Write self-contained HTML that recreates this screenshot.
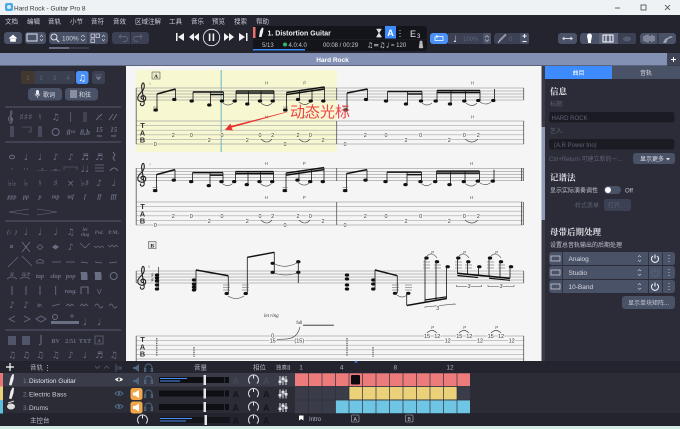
<!DOCTYPE html>
<html lang="zh"><head><meta charset="utf-8"><title>Hard Rock - Guitar Pro 8</title>
<style>
html,body{margin:0;padding:0;width:680px;height:429px;overflow:hidden;background:#2b2c38}
svg{display:block;filter:blur(.35px)}
text{font-family:"Liberation Sans","Noto Sans CJK SC",sans-serif}
.m{font-size:6.5px;fill:#c9cdd8}
.d{font-size:5.5px;fill:#3a3a3a;text-anchor:middle;paint-order:stroke;stroke:#f5f5f5;stroke-width:1.5px}
.dy{stroke:#f7f7d2}
.hp{font-size:4.5px;fill:#555;text-anchor:middle}
.p{font-size:9px;fill:#6a6f84;text-anchor:middle;font-family:"DejaVu Sans",sans-serif}
.ps{font-size:6px;fill:#6a6f84;text-anchor:middle;font-family:"Liberation Serif",serif;font-style:italic;font-weight:bold}
.h{font-size:8.5px;fill:#e3e5ea;font-weight:bold;font-family:"Noto Serif CJK SC",serif}
.s{font-size:6px;fill:#c0c4d0}
.dim{font-size:6px;fill:#5d6174}
.ns{stroke:#222;stroke-width:.85;fill:none}
.b{stroke:#111;stroke-width:1.5;fill:none}
.t{font-size:6.5px;fill:#aeb2c0}
g[fill="#111"] ellipse{rx:2.2px;ry:1.6px}
</style></head><body>
<svg width="680" height="429" viewBox="0 0 680 429" xmlns="http://www.w3.org/2000/svg">
<defs>
<g id="clef"><path d="M6 17.500c-2 .3-2.800-2-1.200-3 1.700-1 4 .2 3.900 2.500-.1 2.400-2.500 3.600-4.500 3.200C1.800 19.700.5 18 .8 15.800c.3-2.500 3-4.500 4.700-6.500 1.500-1.800 2-4 1.700-6-.2-1.300-.7-2-1.100-1.900-.9.2-1.600 2.200-1.500 4.300l2.600 15.500c.3 2-1 3.200-2.400 3-1.200-.2-1.900-1.600-1-2.500" fill="none" stroke="#222" stroke-width="1.100"/></g>
<g id="tab"><text x="0" y="0" style="font-size:7.500px;fill:#333;font-weight:bold" text-anchor="middle">T</text><text x="0" y="7.500" style="font-size:7.500px;fill:#333;font-weight:bold" text-anchor="middle">A</text><text x="0" y="14.500" style="font-size:7.500px;fill:#333;font-weight:bold" text-anchor="middle">B</text></g>
<g id="mix" stroke="#e0e2e8" stroke-width="1" fill="#e0e2e8"><path d="M1 0v9M4 0v9M7 0v9" fill="none"/><rect x="0" y="5" width="2" height="1.500"/><rect x="3" y="2" width="2" height="1.500"/><rect x="6" y="4" width="2" height="1.500"/></g>
<g id="knob"><path d="M-3.500 3.500A5 5 0 1 1 3.500 3.500" fill="none" stroke="#d5d8e0" stroke-width="1"/><path d="M0-4.800V-1.500" stroke="#e8e8ee" stroke-width="1"/></g>
<g id="mute"><rect x="0" y="0" width="12" height="12" rx="2.500" fill="#f3a64a"/><path d="M2.500 4.500h2l4-2.500v8l-4-2.500h-2z" fill="#fff"/></g>
<path id="phones" d="M0 5V3.500a3.500 3.500 0 0 1 7 0V5M-.5 4.500h1.300v3H-.5zM6.200 4.500h1.300v3H6.200z" fill="none" stroke="#4e6b86" stroke-width=".9"/>
<g id="eye"><path d="M0 2.500C2 0 6 0 8 2.500 6 5 2 5 0 2.500z" fill="none" stroke="#4f6d88"/><circle cx="4" cy="2.500" r="1.200" fill="#4f6d88"/></g>
<g id="bar1">
<path class="ns" d="M157 110V94M175.500 99.500V89M193 101V92M210.500 105V92M223.500 101V92M236 101V91M248.500 104V91M261 101V91M274 101V91M286.500 110V92.500M299.500 99V90M312 101V89M324.500 101V87"/>
<path d="M157 94L175.500 89" class="b"/>
<path d="M193 92H223.500M210.500 94.500H223.500" class="b"/>
<path d="M236 91H274M236 93H274" class="b"/>
<path d="M286.500 92.500L324.500 87M286.500 94.500L324.500 89" class="b"/>
<path d="M153 107h5M153 109h5M153 111h5M283 107h5M283 109h5M283 111h5" stroke="#555" stroke-width=".5"/>
<g fill="#111"><ellipse cx="155.700" cy="110" rx="1.800" ry="1.300"/><ellipse cx="174.300" cy="99.500" rx="1.800" ry="1.300"/><ellipse cx="191.700" cy="101" rx="1.800" ry="1.300"/><ellipse cx="209.300" cy="105" rx="1.800" ry="1.300"/><ellipse cx="222" cy="101" rx="1.800" ry="1.300"/><ellipse cx="234.700" cy="101" rx="1.800" ry="1.300"/><ellipse cx="247.300" cy="104" rx="1.800" ry="1.300"/><ellipse cx="260" cy="101" rx="1.800" ry="1.300"/><ellipse cx="272.700" cy="101" rx="1.800" ry="1.300"/><ellipse cx="285.300" cy="110" rx="1.800" ry="1.300"/><ellipse cx="298" cy="99.500" rx="1.800" ry="1.300"/><ellipse cx="310.700" cy="101" rx="1.800" ry="1.300"/><ellipse cx="323.300" cy="101" rx="1.800" ry="1.300"/></g>
<path d="M223 103q5 4 10 0M261 103q6 5 11 0M299 102q6 5 11 0" fill="none" stroke="#444" stroke-width=".6"/>
<path class="ns" d="M347 110V93M367.500 99V89M387.500 101V91.500M407.500 104V91.500M422 101V91.500M437 101V90.500M451 104V90.500M465.500 101V90.500M480 101V90.500M494.500 100V89"/>
<path d="M347 93L367.500 89M387.500 91.500H422M407.500 94H422" class="b"/>
<path d="M437 90.500H480M437 92.500H480" class="b"/>
<path d="M343 107h5M343 109h5M343 111h5" stroke="#555" stroke-width=".5"/>
<g fill="#111"><ellipse cx="345.700" cy="110" rx="1.800" ry="1.300"/><ellipse cx="366" cy="99.500" rx="1.800" ry="1.300"/><ellipse cx="386" cy="101" rx="1.800" ry="1.300"/><ellipse cx="406" cy="104" rx="1.800" ry="1.300"/><ellipse cx="421" cy="101" rx="1.800" ry="1.300"/><ellipse cx="435.700" cy="101" rx="1.800" ry="1.300"/><ellipse cx="450" cy="104" rx="1.800" ry="1.300"/><ellipse cx="464.300" cy="101" rx="1.800" ry="1.300"/><ellipse cx="478.300" cy="100.500" rx="1.800" ry="1.300"/><ellipse cx="493.300" cy="100.500" rx="1.800" ry="1.300"/></g>
<path d="M422 103q5 4 10 0M466 103q6 5 11 0M480 102q6 4 11 0" fill="none" stroke="#444" stroke-width=".6"/>
<text class="hp" x="266.700" y="84.500">H</text><text class="hp" x="304.700" y="84.500">P</text><text class="hp" x="472.300" y="84.500">H</text>
<text class="hp" x="266.700" y="118.500">H</text><text class="hp" x="304.700" y="118.500">P</text><text class="hp" x="472.300" y="118.500">H</text>
</g>
<g id="tabd1">
<text class="d" x="365.300" y="137">2</text><text class="d" x="386" y="137">0</text><text class="d" x="406" y="142">2</text><text class="d" x="420.700" y="137">0</text><text class="d" x="449.300" y="142">2</text><text class="d" x="464.300" y="137">0</text><text class="d" x="478.300" y="137">2</text><text class="d" x="345" y="146">0</text>
<path d="M465 139q7 6 13 0" fill="none" stroke="#444" stroke-width=".6"/>
</g>
<g id="tabd2">
<text class="d dy" x="155.300" y="146">0</text><text class="d dy" x="173.300" y="137">2</text><text class="d dy" x="191.300" y="137">0</text><text class="d dy" x="209.300" y="142">2</text><text class="d dy" x="222" y="137">0</text><text class="d dy" x="247.300" y="142">2</text><text class="d dy" x="260" y="137">0</text><text class="d dy" x="272.700" y="137">2</text><text class="d dy" x="285" y="146">0</text><text class="d dy" x="298" y="137">2</text><text class="d dy" x="310.300" y="137">0</text><text class="d dy" x="323" y="142">2</text>
<path d="M261 139q6 6 11 0M299 139q6 6 11 0" fill="none" stroke="#444" stroke-width=".6"/>
</g>
</defs>

<!-- chrome -->
<rect width="680" height="429" fill="#23242d"/>
<rect width="680" height="15" fill="#eef2f4"/>
<rect x="5" y="3" width="8" height="8" rx="2" fill="#4aa8e8"/><circle cx="9" cy="7" r="2" fill="#d7eefb"/>
<text x="14" y="10.500" style="font-size:6.500px;fill:#333">Hard Rock - Guitar Pro 8</text>
<path d="M615 8h5" stroke="#444" stroke-width=".8"/><rect x="641" y="5" width="5" height="5" fill="none" stroke="#444" stroke-width=".8"/><path d="M665 5l5 5M670 5l-5 5" stroke="#444" stroke-width=".8"/>
<text class="m" x="5" y="23.500">文档</text><text class="m" x="27" y="23.500">编辑</text><text class="m" x="48" y="23.500">音轨</text><text class="m" x="70" y="23.500">小节</text><text class="m" x="91" y="23.500">音符</text><text class="m" x="113" y="23.500">音效</text><text class="m" x="135" y="23.500">区域注解</text><text class="m" x="169" y="23.500">工具</text><text class="m" x="191" y="23.500">音乐</text><text class="m" x="212" y="23.500">预览</text><text class="m" x="234" y="23.500">搜索</text><text class="m" x="256" y="23.500">帮助</text>
<!-- toolbar left -->
<rect x="4" y="32" width="18" height="12" rx="3" fill="#4a5268"/><path d="M9 38.500l4-3.500 4 3.500M10.500 38v3.500h5V38z" fill="#fff" stroke="#fff" stroke-width=".6"/>
<rect x="25" y="32" width="21" height="12" rx="3" fill="#4a5268"/><rect x="27" y="34" width="10" height="7" fill="none" stroke="#e0e2e8"/><path d="M40 37l1.500-2 1.500 2M40 39l1.500 2 1.500-2" fill="none" stroke="#d5d8e0" stroke-width=".6"/>
<rect x="49" y="32" width="59" height="12" rx="3" fill="#4a5268"/>
<circle cx="54" cy="37" r="3" fill="none" stroke="#e0e2e8"/><path d="M56 39l3 3" stroke="#e0e2e8" stroke-width="1.200"/>
<text x="62" y="40.500" style="font-size:6.500px;fill:#d5d8e0">100%</text>
<path d="M81 37l2-2 2 2M81 39l2 2 2-2" fill="none" stroke="#d5d8e0" stroke-width=".6"/><path d="M88 32v12" stroke="#333644"/>
<rect x="91" y="34" width="3.500" height="3.500" fill="none" stroke="#e0e2e8" stroke-width=".7"/><rect x="96" y="34" width="3.500" height="3.500" fill="none" stroke="#e0e2e8" stroke-width=".7"/><rect x="91" y="39" width="3.500" height="3.500" fill="none" stroke="#e0e2e8" stroke-width=".7"/>
<path d="M102 37l1.500-2 1.500 2M102 39l1.500 2 1.500-2" fill="none" stroke="#d5d8e0" stroke-width=".6"/>
<rect x="49" y="47" width="40" height="2" fill="#3a3d4c"/><rect x="49" y="47" width="20" height="2" fill="#666b80"/>
<rect x="112" y="32" width="37" height="12" rx="3" fill="#3b4053"/><path d="M130.500 32v12" stroke="#2b2c38"/>
<path d="M119 36.500h6a2.500 2.500 0 0 1 0 5h-2M121 34.500l-2 2 2 2M142 36.500h-6a2.500 2.500 0 0 0 0 5h2M140 34.500l2 2-2 2" fill="none" stroke="#5f6579" stroke-width=".9"/>
<!-- transport -->
<g fill="#f2f2f4"><rect x="176" y="33" width="1.500" height="8"/><path d="M184 33v8l-6-4zM194 33v8l-5-4zM199 33v8l-5-4zM224 33v8l5-4zM229 33v8l5-4zM239 33v8l6-4z"/><rect x="246" y="33" width="1.500" height="8"/><rect x="208.800" y="33.500" width="1.600" height="7.500"/><rect x="212.600" y="33.500" width="1.600" height="7.500"/></g>
<circle cx="211.500" cy="37.500" r="8.200" fill="none" stroke="#e8e8ec" stroke-width=".9"/>
<!-- LCD -->
<rect x="253" y="26" width="174" height="25" rx="3" fill="#14151b"/>
<rect x="253" y="27" width="2.500" height="11" fill="#e87070"/>
<path d="M259 37l1-6 2-3.500 1.500.5-.5 4-1.500 5z" fill="#eee"/>
<text x="267.500" y="35.500" style="font-size:7px;font-weight:bold;fill:#eef0f4">1. Distortion Guitar</text>
<path d="M253 39.500h174" stroke="#24252d" stroke-width=".6"/>
<text x="262" y="47" style="font-size:6px;fill:#bfc3ce">5/13</text><circle cx="285" cy="44.500" r="2" fill="#2fb866"/>
<text x="288.500" y="47" style="font-size:6px;fill:#bfc3ce">4.0:4.0</text>
<text x="323" y="47" style="font-size:6px;fill:#c8ccd6">00:08 / 00:29</text>
<rect x="253" y="49" width="52" height="1.500" fill="#3d8bfd"/>
<rect x="385" y="26" width="11" height="12.500" fill="#3d8bfd"/><text x="390.500" y="36" text-anchor="middle" style="font-size:9px;font-weight:bold;fill:#fff">A</text>
<path d="M376.500 29h5l-5 8h5zM376.500 37h5l-2.500-4z" fill="#dcdfe6" stroke="#dcdfe6" stroke-width=".5"/>
<path d="M400 30v.8M400 33v.8M400 36v.8" stroke="#ddd" stroke-width="1.200"/>
<text x="410" y="37" style="font-size:9px;fill:#e4e6ec">E</text><text x="417" y="38" style="font-size:6px;fill:#e4e6ec">3</text>
<text x="367" y="47.500" style="font-size:7px;fill:#e0e2e8;font-family:'DejaVu Sans'">♫=♫</text>
<text x="386" y="47.500" style="font-size:7px;fill:#e0e2e8;font-family:'DejaVu Sans'">♩</text>
<text x="391" y="47" style="font-size:6px;fill:#c8ccd6">= 120</text>
<path d="M420 41h2l1 7h-4zM422 40.500l-1 5" fill="#bbb" stroke="#bbb" stroke-width=".4"/>
<!-- right tools -->
<rect x="430" y="33" width="18" height="11" rx="3" fill="#4a90f5"/>
<path d="M436 36.500h7v4h-8v-4M437.500 35l-1.500 1.500 1.500 1.500" fill="none" stroke="#fff" stroke-width=".8"/>
<rect x="448" y="33" width="43" height="11" fill="#3b4053"/><rect x="483" y="33" width="8" height="11" rx="2" fill="#4a5268"/>
<text x="453" y="42" style="font-size:9px;fill:#e4e6ec;font-family:'DejaVu Sans'">♩</text>
<text x="463" y="41" style="font-size:6px;fill:#5f6579">100%</text>
<path d="M485 37.500l2-2 2 2M485 39.500l2 2 2-2" fill="none" stroke="#cfd2da" stroke-width=".6"/>
<rect x="494" y="33" width="35" height="11" rx="3" fill="#3b4053"/><rect x="520" y="33" width="9" height="11" rx="2" fill="#4a5268"/>
<path d="M498 43l3-3 5-5-1-.5-5 5z" fill="none" stroke="#c0c4cf" stroke-width=".7"/>
<text x="509" y="41" style="font-size:6px;fill:#5f6579">0</text>
<path d="M522.500 36h4M524.500 34v4M522.500 41.500h4" stroke="#fff" stroke-width=".9"/>
<rect x="558" y="33" width="19" height="11" rx="3" fill="#4a5268"/><path d="M562 38.500l2.500-2v4zM573 38.500l-2.500-2v4z" fill="#d8dae2"/><path d="M564 38.500h7" stroke="#d8dae2"/>
<rect x="580" y="33" width="56" height="11" rx="3" fill="#4a5268"/><rect x="599" y="33" width="19" height="11" fill="#5a637b"/><rect x="618" y="33" width="18" height="11" rx="2" fill="#3b4053"/>
<path d="M587 36a2.500 2.500 0 0 1 5 0l-1 5v2h-3v-2z" fill="#fff"/><rect x="603" y="35" width="10" height="7" fill="none" stroke="#fff"/><path d="M606 35v7M610 35v7" stroke="#fff"/>
<ellipse cx="627" cy="39" rx="4" ry="2.500" fill="#565c70"/>
<rect x="640" y="33" width="36" height="11" rx="3" fill="#4a5268"/><path d="M658 33v11" stroke="#2b2c38"/>
<path d="M644 36v5M646 35v7M648 34.500v8M650 36v5M652 35v7M654 36v5" stroke="#bfc3ce" stroke-width=".9"/><path d="M663 43l2-4 6-3 2 1-5 2-2 4z" fill="#9fa4b4"/>
<!-- tab bar -->
<rect y="53" width="680" height="12.500" fill="#8391b4"/>
<text x="332.500" y="61.800" text-anchor="middle" style="font-size:6.500px;font-weight:bold;fill:#fff">Hard Rock</text>
<rect x="667" y="53" width="13" height="12.500" fill="#3f4557"/><path d="M671 59.500h5M673.500 57v5" stroke="#fff"/>
<rect y="65.500" width="680" height="1" fill="#33384a"/>

<!-- left panel -->
<rect y="66" width="126" height="295" fill="#2b2c38"/>
<rect x="21" y="71" width="13.500" height="13" rx="2" fill="#43382f"/><rect x="34.500" y="71" width="13.500" height="13" fill="#3a4050"/><rect x="48" y="71" width="13.500" height="13" fill="#3a4050"/><rect x="61.500" y="71" width="13.500" height="13" rx="2" fill="#3a4050"/>
<text x="28" y="80" text-anchor="middle" style="font-size:6px;fill:#6b5f50">1</text><text x="41" y="80" text-anchor="middle" style="font-size:6px;fill:#5f6579">2</text><text x="54.500" y="80" text-anchor="middle" style="font-size:6px;fill:#5f6579">3</text><text x="68" y="80" text-anchor="middle" style="font-size:6px;fill:#5f6579">4</text>
<rect x="76" y="71" width="12.500" height="13" rx="2.500" fill="#4a90f5"/><text x="82" y="81" text-anchor="middle" style="font-size:9px;fill:#fff;font-family:'DejaVu Sans'">♫</text>
<rect x="92" y="71" width="13" height="13" rx="2.500" fill="#3b4053"/><path d="M95 75h7M96 77h5l-2.500 3z" fill="#717689" stroke="#717689" stroke-width=".6"/>
<rect x="28" y="88" width="34" height="12.500" rx="3.500" fill="#4a5268"/><rect x="65" y="88" width="33" height="12.500" rx="3.500" fill="#4a5268"/>
<rect x="36" y="90" width="3" height="5" rx="1.500" fill="#e8e8ee"/><path d="M35 93.500a2.500 2.500 0 0 0 5 0M37.500 96v2" fill="none" stroke="#e8e8ee" stroke-width=".6"/>
<text x="43" y="97" style="font-size:6px;fill:#e0e2e8">歌词</text>
<rect x="70" y="90" width="7" height="8" fill="#8a8f9f"/><text x="79" y="97" style="font-size:6px;fill:#e0e2e8">和弦</text>
<path d="M5 107h116M5 142h116M5 221h116M5 330h116" stroke="#555a6e" stroke-width="1"/>

<g>
<path transform="translate(8,110) scale(.55)" d="M6 17.500c-2 .3-2.800-2-1.200-3 1.700-1 4 .2 3.900 2.500-.1 2.400-2.500 3.600-4.500 3.200C1.800 19.700.5 18 .8 15.800c.3-2.500 3-4.500 4.700-6.500 1.500-1.800 2-4 1.700-6-.2-1.300-.7-2-1.100-1.900-.9.2-1.600 2.200-1.500 4.300l2.600 15.500c.3 2-1 3.200-2.400 3-1.200-.2-1.900-1.600-1-2.500" fill="none" stroke="#6a6f84" stroke-width="1.500"/>
<text class="p" x="26" y="120">♯♯♯</text><text class="p" x="40" y="120">♮</text><text class="p" x="55.700" y="120">♫</text><path d="M70.700 112v10M84 112v10M86 112v10" stroke="#6a6f84" stroke-width=".7"/><path d="M96 120l6-6M98 115v.8M101 119v.8M109 120l4-6M113 120l4-6" stroke="#6a6f84" stroke-width=".9"/>
<path d="M11 126v11M13 126v11M41 126v11M39 126v11" stroke="#6a6f84" stroke-width=".9"/><path d="M22 127h9v5h-3" fill="none" stroke="#6a6f84" stroke-width=".6"/><circle cx="55.700" cy="132" r="3.500" fill="none" stroke="#6a6f84"/>
<text class="ps" x="70.700" y="135" style="font-size:8px">8ᵛᵃ</text><text class="ps" x="85" y="135" style="font-size:8px">8ᵥb</text><text class="ps" x="99.300" y="132" style="font-size:7px">15</text><text class="ps" x="99.300" y="137" style="font-size:4px">ma</text><text class="ps" x="113.700" y="132" style="font-size:7px">15</text><text class="ps" x="113.700" y="137" style="font-size:4px">mb</text>

<ellipse cx="12" cy="157" rx="2.500" ry="1.800" fill="none" stroke="#6a6f84"/><text class="p" x="26" y="160">♩</text><text class="p" x="40" y="160">♩</text><text class="p" x="55.700" y="160">♪</text><text class="p" x="70.700" y="160">♪</text><text class="p" x="85" y="160">♬</text><text class="p" x="99.300" y="160">♬</text><path d="M113 152l2 3-2 3 2 3" fill="none" stroke="#6a6f84"/>
<text class="p" x="12" y="172">·</text><text class="p" x="26" y="172">··</text><text class="ps" x="42" y="171" style="font-size:4px">—3—</text><text class="ps" x="55.700" y="171" style="font-size:4px">—m—</text><path d="M64 167h13v3M64 167v3" fill="none" stroke="#6a6f84" stroke-width=".6"/><text class="p" x="85" y="172">♩♩</text><path d="M95 165h9M95 168h9M95 171h9" stroke="#6a6f84" stroke-width=".7" fill="none"/><path d="M110 171q4-6 8 0" fill="none" stroke="#6a6f84"/>
<text class="p" x="12" y="186">♭♭</text><text class="p" x="26" y="186">♭</text><text class="p" x="40" y="186">♮</text><text class="p" x="55.700" y="186">♯</text><text class="p" x="70.700" y="186">×</text><text class="p" x="85" y="186">♭♯</text><text class="p" x="99.300" y="186">♪</text><text class="p" x="113.700" y="186">♩</text>
<text class="ps" x="12" y="198.500">ppp</text><text class="ps" x="26" y="198.500">pp</text><text class="ps" x="40" y="198.500">p</text><text class="ps" x="55.700" y="198.500">mp</text><text class="ps" x="70.700" y="198.500">mf</text><text class="ps" x="85" y="198.500">f</text><text class="ps" x="99.300" y="198.500">ff</text><text class="ps" x="113.700" y="198.500">fff</text>
<path d="M29 210L9 213M29 216L9 213M37 210l20 3M37 216l20-3" stroke="#6a6f84" stroke-width=".6" fill="none" transform="translate(0,-1)"/>

<text class="ps" x="12" y="234">(♩)</text><text class="p" x="26" y="235">♩</text><text class="p" x="40" y="235">♩</text><text class="p" x="55.700" y="235">♩</text><text class="p" x="70.700" y="235">♫</text><text class="ps" x="85" y="231" style="font-size:5px">let</text><text class="ps" x="85" y="236" style="font-size:5px">ring</text><text class="ps" x="99.300" y="234" style="font-size:5px">Ped.</text><text class="ps" x="113.700" y="234" style="font-style:normal;font-size:5.500px">P.M.</text>
<path d="M10 245l3 3M13 245l-3 3M22 242l8 10M30 242l-8 10" stroke="#6a6f84" stroke-width=".9"/><path d="M37 247l3-2.500 3 2.500-3 2.500z" fill="none" stroke="#6a6f84" stroke-width=".7"/><path d="M52 247l3.500-2.500 3.500 2.500-3.500 2.500z" fill="#6a6f84"/><text class="p" x="70.700" y="250">♪</text><path d="M80 243l5 5 5-5" fill="none" stroke="#6a6f84" stroke-width=".7"/><path d="M94 246l2 1.500 2-1.500 2 1.500 2-1.500 2 1.500M108 245l2 2 2-2 2 2 2-2 2 2" fill="none" stroke="#6a6f84" stroke-width=".7"/>
<path d="M8 267l10-10M22 256l10 10M36 262q4-5 8 0M36 263h8M52 262h9M66 262h9M81 262l7 1M95 262l7 1M109 263l8-1" fill="none" stroke="#6a6f84" stroke-width=".7"/>
<text class="ps" x="12" y="276" style="font-size:5px">H</text><text class="ps" x="26" y="276" style="font-size:5px">H/P</text><path d="M7 279q5-4 10 0M20 279q5-4 10 0" fill="none" stroke="#6a6f84" stroke-width=".7"/><text class="ps" x="40" y="278" style="font-size:6.500px">tap</text><text class="ps" x="55.700" y="278" style="font-size:6.500px">slap</text><text class="ps" x="70.700" y="278" style="font-size:6.500px">pop</text>
<path d="M81 280v-5l-.5-3h6.500l.5 3v5zM95 280v-5l-.5-3h6.500l.5 3v5z" fill="#6a6f84"/><circle cx="113.700" cy="276" r="3.500" fill="none" stroke="#6a6f84"/>
<path d="M12 286v9M26 286v9M40 286v9M55.700 286v9" stroke="#6a6f84" stroke-width=".9"/><text class="ps" x="70.700" y="293" style="font-size:6px">rasg.</text><path d="M81 287h7v7M81 287v7" fill="none" stroke="#6a6f84"/><text class="p" x="99.300" y="294" style="font-size:7px">V</text>
<text class="p" x="12" y="308">♪</text><text class="p" x="26" y="308">♪</text><text class="ps" x="40" y="307">tr.</text><path d="M52 306l8-2M66 306l2-2 2 2 2-2 2 2M80 306l2-2 2 2 2-2 2 2M95 306q2-4 4 0t4 0M109 306q2-4 4 0t4 0" stroke="#6a6f84" fill="none" stroke-width=".8"/>
<path d="M15 316l-6 3 6 3M24 316l6 3-6 3M36 319l5-3 5 3-5 3z" fill="none" stroke="#6a6f84" stroke-width=".8"/><circle cx="55" cy="317" r="2.500" fill="none" stroke="#6a6f84"/><rect x="51" y="321" width="14" height="3" fill="#6a6f84"/><path d="M70 316h4M72 314v4" stroke="#6a6f84" stroke-width=".7"/><rect x="65" y="321" width="14" height="3" fill="#6a6f84"/><text class="p" x="85" y="325">♩</text><text class="p" x="99.300" y="325">♩</text>

<rect x="8" y="336" width="8" height="9" fill="#50556a"/><rect x="22" y="336" width="8" height="9" fill="#50556a"/><path d="M41 335v9l-2 1" stroke="#6a6f84" fill="none"/>
<text class="ps" x="55.700" y="343" style="font-style:normal;font-size:6px">BV</text><text class="ps" x="70.700" y="343" style="font-style:normal;font-size:6px">2:51</text><text class="ps" x="85" y="343" style="font-style:normal;font-size:6px">TXT</text><rect x="95" y="336" width="8" height="8" fill="none" stroke="#6a6f84" stroke-width=".7"/><text class="ps" x="99" y="342.500" style="font-style:normal;font-size:5px">A</text>
<text class="p" x="12" y="358">♫</text><text class="p" x="26" y="358">♫</text><text class="p" x="40" y="358">♫</text><text class="p" x="55.700" y="358">♫</text><text class="p" x="70.700" y="358">♪</text><text class="p" x="85" y="358">♩</text><text class="p" x="99.300" y="358">♬</text><text class="p" x="113.700" y="358">♫</text>
</g>

<!-- score -->
<rect x="126" y="66" width="419" height="295" fill="#f5f5f5"/>
<rect x="136" y="70" width="201" height="82" fill="#f7f7d2"/>
<rect x="220.500" y="70" width="1.500" height="82" fill="#9ac9c8"/>
<path d="M136 88h388M136 91h388M136 94h388M136 97h388M136 100h388M136 121h388M136 125.600h388M136 130.200h388M136 134.800h388M136 139.400h388M136 144h388M136 168.500h387M136 171.500h387M136 174.500h387M136 177.500h387M136 180.500h387M136 202h387M136 206.600h387M136 211.200h387M136 215.800h387M136 220.400h387M136 225h387M136 271h388M136 274h388M136 277h388M136 280h388M136 283h388M136 336h388M136 340.600h388M136 345.200h388M136 349.800h388M136 354.400h388M136 359h388" stroke="#a8a8a8" stroke-width=".65" fill="none"/>
<path d="M136.200 88v56M336.700 88v12M336.700 121v23M523.700 88v12M523.700 121v23M136.200 168v57M336.700 168v13M336.700 202v23M136.200 271v12M136.200 336v25M523.700 271v12M523.700 336v25" stroke="#555" stroke-width=".8" fill="none"/>
<path d="M521.500 168v13M521.500 202v23M523.300 168v13M523.300 202v23" stroke="#555" stroke-width=".9" fill="none"/>
<rect x="152" y="72" width="8" height="7" fill="#e8e8c4" stroke="#555" stroke-width=".6"/><text x="156" y="77.800" text-anchor="middle" style="font-size:5.500px;font-family:'Liberation Serif';fill:#222;font-weight:bold">A</text>
<rect x="148.500" y="241.500" width="7.500" height="7" fill="#e4e4e4" stroke="#555" stroke-width=".6"/><text x="152.200" y="247.300" text-anchor="middle" style="font-size:5.500px;font-family:'Liberation Serif';fill:#222;font-weight:bold">B</text>
<text x="149" y="85" style="font-size:3.500px;fill:#888">1</text><text x="149" y="166" style="font-size:3.500px;fill:#888">7</text><text x="148" y="268" style="font-size:3.500px;fill:#888">9</text>
<use href="#clef" x="137" y="81.500"/><use href="#clef" x="137" y="162"/><use href="#clef" x="137" y="265"/>
<use href="#tab" x="142.500" y="128"/><use href="#tab" x="142.500" y="209"/><use href="#tab" x="142.500" y="342"/>
<use href="#bar1"/><use href="#bar1" y="80.600" x="-.5"/>
<use href="#tabd1"/><use href="#tabd2"/>
<g transform="translate(0,81)"><text class="d" x="155.300" y="146">0</text><text class="d" x="173.300" y="137">2</text><text class="d" x="191.300" y="137">0</text><text class="d" x="209.300" y="142">2</text><text class="d" x="222" y="137">0</text><text class="d" x="247.300" y="142">2</text><text class="d" x="260" y="137">0</text><text class="d" x="272.700" y="137">2</text><text class="d" x="285" y="146">0</text><text class="d" x="298" y="137">2</text><text class="d" x="310.300" y="137">0</text><text class="d" x="323" y="142">2</text><path d="M261 139q6 6 11 0M299 139q6 6 11 0" fill="none" stroke="#444" stroke-width=".6"/><use href="#tabd1"/></g>
<!-- annotation -->
<path d="M286.700 112L231 127.500l1.500 2.800-7 -.8 4.800-5.300 .9 2z" fill="#ea2f2f" stroke="#ea2f2f" stroke-width=".6"/>
<text x="290" y="117" style="font-size:15px;fill:#ee4444">动态光标</text>
<!-- system 3 notes -->
<text x="151" y="277" style="font-size:6px;fill:#222;font-family:'DejaVu Sans'">♯</text>
<text x="151" y="282" style="font-size:6px;fill:#222;font-family:'DejaVu Sans'">♯</text>
<path d="M158.500 267V289" stroke="#444" stroke-width=".8"/>
<g fill="#111">
<ellipse cx="157" cy="275" rx="1.800" ry="1.300"/><ellipse cx="157" cy="278" rx="1.800" ry="1.300"/><ellipse cx="157" cy="281" rx="1.800" ry="1.300"/><ellipse cx="157" cy="285" rx="1.800" ry="1.300"/><ellipse cx="157" cy="289" rx="1.800" ry="1.300"/>
<ellipse cx="194" cy="280" rx="1.800" ry="1.300"/><ellipse cx="194" cy="284" rx="1.800" ry="1.300"/><ellipse cx="194" cy="287" rx="1.800" ry="1.300"/><ellipse cx="194" cy="290" rx="1.800" ry="1.300"/>
<ellipse cx="226.700" cy="293.500" rx="1.800" ry="1.300"/><ellipse cx="245.700" cy="293.500" rx="1.800" ry="1.300"/>
<ellipse cx="272.700" cy="263.300" rx="1.800" ry="1.300"/><ellipse cx="272.700" cy="272.300" rx="1.800" ry="1.300"/>
<ellipse cx="298.300" cy="261.700" rx="1.800" ry="1.300"/><ellipse cx="298.300" cy="272.300" rx="1.800" ry="1.300"/>
<ellipse cx="347" cy="275" rx="1.800" ry="1.300"/><ellipse cx="347" cy="279" rx="1.800" ry="1.300"/><ellipse cx="347" cy="285" rx="1.800" ry="1.300"/><ellipse cx="347" cy="289" rx="1.800" ry="1.300"/>
<ellipse cx="373.300" cy="280" rx="1.800" ry="1.300"/><ellipse cx="373.300" cy="284" rx="1.800" ry="1.300"/><ellipse cx="373.300" cy="289" rx="1.800" ry="1.300"/>
<ellipse cx="395" cy="293.300" rx="1.800" ry="1.300"/><ellipse cx="408.300" cy="293.300" rx="1.800" ry="1.300"/>
<ellipse cx="426.500" cy="258" rx="1.800" ry="1.300"/><ellipse cx="437" cy="261.700" rx="1.800" ry="1.300"/><ellipse cx="447.700" cy="266.700" rx="1.800" ry="1.300"/>
<ellipse cx="458.300" cy="258" rx="1.800" ry="1.300"/><ellipse cx="468.300" cy="261.700" rx="1.800" ry="1.300"/><ellipse cx="479.300" cy="266.700" rx="1.800" ry="1.300"/>
<ellipse cx="490" cy="258" rx="1.800" ry="1.300"/><ellipse cx="501" cy="261.700" rx="1.800" ry="1.300"/><ellipse cx="511" cy="266.700" rx="1.800" ry="1.300"/>
</g>
<path class="ns" d="M196 270V290M228.300 275.700V293M247.300 257.300V293M274.300 252.300V272M298.300 262V283M375 270V289M397.300 275.700V293M406.700 305V293M425 258V302M436 262V300.500M446.500 267V299M457.500 258V273.500M467.500 262V274.500M478.500 267V275.500M489 258V276M500 262V277M510 267V278"/>
<path d="M196 270L228.300 275.700M247.300 257.300L274.300 252.300M375 270L397.300 275.700" class="b"/>
<path d="M406.700 305.500L446.700 298.500" stroke="#111" stroke-width="1.600"/><path d="M425 300L446.700 296.800" stroke="#111" stroke-width="1.200"/>
<path d="M457.300 273.300L510 278.300" stroke="#111" stroke-width="1.600"/><path d="M457.300 275.500L478 277.500M489 278.200L510 280.300" stroke="#111" stroke-width="1.200"/>
<path d="M223 285h7M223 287.500h7M223 290h7M242 285h7M242 287.500h7M242 290h7M392 285h7M392 287.500h7M392 290h7M405 285h7M405 287.500h7M405 290h7M423 262h7M423 265h7M423 268h7M434 265h7M434 268h7M455 262h7M455 265h7M455 268h7M465 265h7M465 268h7M487 262h7M487 265h7M487 268h7M498 265h7M498 268h7" stroke="#555" stroke-width=".55"/>
<path d="M228 296q8 5 16 0M275 264q10 5 22-1M274 273q12 4 23 0M397 295q5 4 10 0M427 256q5-5 10 2M459 256q5-5 10 2M491 256q5-5 10 2" fill="none" stroke="#444" stroke-width=".6"/>
<path d="M425 308v-1l30-3v1M456.500 285v1.500h25V285M488 285v1.500h26V285" fill="none" stroke="#444" stroke-width=".6"/>
<text x="437.700" y="310" style="font-size:5px;font-style:italic;fill:#333;paint-order:stroke;stroke:#f5f5f5;stroke-width:1.500px" text-anchor="middle">3</text><text x="469" y="288" style="font-size:5px;font-style:italic;fill:#333;paint-order:stroke;stroke:#f5f5f5;stroke-width:1.500px" text-anchor="middle">3</text><text x="501" y="288" style="font-size:5px;font-style:italic;fill:#333;paint-order:stroke;stroke:#f5f5f5;stroke-width:1.500px" text-anchor="middle">3</text>
<text class="hp" x="432.700" y="254">P</text><text class="hp" x="464.700" y="254">P</text><text class="hp" x="496.700" y="254">P</text>
<text x="264" y="317" style="font-size:5px;font-family:'Liberation Serif';font-style:italic;fill:#333">let ring</text>
<text x="299.300" y="324" text-anchor="middle" style="font-size:4.500px;fill:#333">full</text>
<path d="M303 325.700l1 -1 1 1 1 -1 1 1 1 -1 1 1 1 -1 1 1 1 -1 1 1 1 -1 1 1 1 -1 1 1 1 -1 1 1 1 -1 1 1 1 -1 1 1 1 -1 1 1 1 -1 1 1 1 -1 1 1 1 -1 1 1 1 -1 1 1 1 -1" fill="none" stroke="#333" stroke-width=".6"/>
<path d="M277 339.300c10 0 20 1 23-12.500" fill="none" stroke="#444" stroke-width=".6"/>
<text class="d" x="272.700" y="337.500">0</text><text class="d" x="272.700" y="342.500">15</text><text class="d" x="299.300" y="342.500">(15)</text>
<text class="d" x="427" y="338">15</text><text class="d" x="437.300" y="338">12</text><text class="d" x="447.700" y="342.500">12</text><text class="d" x="459.300" y="338">15</text><text class="d" x="469.300" y="338">12</text><text class="d" x="480" y="342.500">12</text><text class="d" x="490.700" y="338">15</text><text class="d" x="501" y="338">12</text><text class="d" x="511.700" y="342.500">12</text>
<path d="M427 333q5-5 10 0M459 333q5-5 10 0M491 333q5-5 10 0" fill="none" stroke="#444" stroke-width=".6"/>
<text class="hp" x="432.700" y="329">P</text><text class="hp" x="464.700" y="329">P</text><text class="hp" x="496.700" y="329">P</text>
<path d="M156.700 338v18M347 338v18M194 347v10M373 347v10" stroke="#777" stroke-width="1.500" stroke-dasharray="1.500 .8"/>
<!-- scrollbar -->
<rect x="541.500" y="66" width="3.500" height="295" fill="#3a3b45"/><rect x="541.500" y="127" width="3.500" height="93" fill="#8f9ab8"/>

<!-- right panel -->
<rect x="545" y="66" width="135" height="295" fill="#2b2c38"/>
<rect x="545" y="66" width="67" height="13" fill="#3d8bfd"/><rect x="612" y="66" width="68" height="13" fill="#4a5268"/>
<text x="578.500" y="75" text-anchor="middle" style="font-size:6px;fill:#fff">曲目</text><text x="646" y="75" text-anchor="middle" style="font-size:6px;fill:#d8dae2">音轨</text>
<text class="h" x="550" y="94.500">信息</text>
<text class="dim" x="550" y="106">标题:</text>
<rect x="549" y="112" width="125.500" height="10.500" rx="2.500" fill="#1b1c23"/><text x="551.500" y="120" style="font-size:6px;fill:#5d6174">HARD ROCK</text>
<text class="dim" x="550" y="133">艺人:</text>
<rect x="549" y="139" width="125.500" height="10.500" rx="2.500" fill="#1b1c23"/><text x="554" y="147" style="font-size:6px;fill:#5d6174">(A.R Power trio)</text>
<text class="dim" x="549" y="161">Ctrl+Return 可建立新的一...</text>
<rect x="633" y="153" width="42" height="11" rx="3" fill="#4a5268"/><text x="640" y="161" style="font-size:6px;fill:#e0e2e8">显示更多</text><path d="M666 158h4l-2 2.500z" fill="#e0e2e8"/>
<text class="h" x="550" y="180.500">记谱法</text>
<text class="s" x="550" y="192.500">显示实际演奏调性</text>
<rect x="604" y="186" width="17" height="8" rx="4" fill="#4a5268"/><circle cx="608" cy="190" r="3" fill="#fff"/>
<text x="625" y="192.500" style="font-size:6px;fill:#c0c4d0">Off</text>
<text class="dim" x="575" y="207.500">样式表单</text>
<rect x="604" y="199" width="27" height="12" rx="2.500" fill="#3b4053"/><text x="608" y="207.500" class="dim">打开...</text>
<text class="h" x="550" y="235">母带后期处理</text>
<text class="s" x="550" y="247">设置总音轨输出的后期处理</text>
<rect x="549" y="252" width="126" height="13" rx="3" fill="#4a5268"/><rect x="549" y="266" width="126" height="13" rx="3" fill="#4a5268"/><rect x="549" y="280" width="126" height="13" rx="3" fill="#4a5268"/>
<path d="M562.500 252v41M648.500 252v41M662.500 252v41" stroke="#2b2c38" stroke-width=".8"/>
<rect x="551" y="256" width="9" height="5" fill="none" stroke="#d8dae2" stroke-width=".7"/><rect x="551" y="270" width="9" height="5" fill="none" stroke="#d8dae2" stroke-width=".7"/><rect x="551" y="284" width="9" height="5" fill="none" stroke="#d8dae2" stroke-width=".7"/>
<text x="568.500" y="261" style="font-size:6.500px;fill:#d8dae2">Analog</text><text x="568.500" y="275" style="font-size:6.500px;fill:#d8dae2">Studio</text><text x="568.500" y="289" style="font-size:6.500px;fill:#d8dae2">10-Band</text>
<path d="M638 257l1.500-1.500 1.500 1.500M638 260l1.500 1.500 1.500-1.500M638 271l1.500-1.500 1.500 1.500M638 274l1.500 1.500 1.500-1.500M638 285l1.500-1.500 1.500 1.500M638 288l1.500 1.500 1.500-1.500" fill="none" stroke="#cfd2da" stroke-width=".6"/>
<path d="M653 256a3.500 3.500 0 1 0 4 0M655 254.500v4M653 284a3.500 3.500 0 1 0 4 0M655 282.500v4" fill="none" stroke="#fff" stroke-width="1"/>
<path d="M653 270a3.500 3.500 0 1 0 4 0M655 268.500v4" fill="none" stroke="#5a637b" stroke-width="1"/>
<path d="M669 255v.8M669 258v.8M669 261v.8M669 269v.8M669 272v.8M669 275v.8M669 283v.8M669 286v.8M669 289v.8" stroke="#e0e2e8" stroke-width="1"/>
<rect x="622" y="296" width="53" height="13" rx="3" fill="#4a5268"/><text x="628" y="305" style="font-size:6px;fill:#c8ccd6">显示单块矩阵...</text>

<!-- bottom panel -->
<rect y="361" width="680" height="65" fill="#2b2c36"/>
<rect y="361" width="680" height="12" fill="#23242d"/>
<rect y="413" width="680" height="13" fill="#23242d"/>
<rect y="426" width="680" height="3" fill="#d5ece6"/>
<path d="M356 360.500l-2 2h4z" fill="#3d8bfd"/>
<path d="M6 367h8M10 363v8" stroke="#fff" stroke-width="1.200"/>
<text class="t" x="30" y="369.500">音轨</text><path d="M47.500 365v.8M47.500 367.500v.8M47.500 370v.8" stroke="#ccc"/>
<path d="M95 366l2.500 2.500 2.500-2.500M104 368.500l2.500-2.500 2.500 2.500" fill="none" stroke="#4a4e5e"/>
<path d="M116 364v8M117 367h4v2h-4" fill="none" stroke="#4a5a70"/>
<path d="M133 367h2l4-3v8l-4-3h-2z" fill="#50667c"/><use href="#phones" x="145" y="364"/>
<text class="t" x="194" y="369.500">音量</text><text class="t" x="253" y="369.500">相位</text><text x="276" y="369.500" style="font-size:5.500px;fill:#aeb2c0">独奏</text><path d="M288 365v5M289.500 365v5" stroke="#aeb2c0" stroke-width=".6"/>
<rect x="3" y="373" width="292" height="13.500" fill="#3a3c49"/>
<rect y="373" width="3" height="13.500" fill="#e87878"/><rect y="386.500" width="3" height="13.500" fill="#e9d27a"/><rect y="400" width="3" height="13.500" fill="#5fc0dd"/>
<path d="M9 385l1.500-7 2-4 1.500 .5-.5 5-2 6zM9 398.500l1.500-7 2-4 1.500 .5-.5 5-2 6z" fill="#eee"/><ellipse cx="11" cy="406.500" rx="4" ry="3" fill="#ddd"/><path d="M8 403l6-2" stroke="#ddd"/>
<text x="23" y="383" style="font-size:6.500px;fill:#7c8092">1.</text><text x="29" y="383" style="font-size:6.500px;fill:#e0e2e8">Distortion Guitar</text>
<text x="23" y="396.500" style="font-size:6.500px;fill:#7c8092">2.</text><text x="29" y="396.500" style="font-size:6.500px;fill:#d0d3dc">Electric Bass</text>
<text x="23" y="410" style="font-size:6.500px;fill:#7c8092">3.</text><text x="29" y="410" style="font-size:6.500px;fill:#d0d3dc">Drums</text>
<text x="30" y="422.500" style="font-size:6.500px;fill:#b8bcc8">主控台</text>
<g transform="translate(115,377)"><path d="M0 2.500C2 0 6 0 8 2.500 6 5 2 5 0 2.500z" fill="#eee"/><circle cx="4" cy="2.500" r="1.200" fill="#333"/></g>
<use href="#eye" x="115" y="391"/><use href="#eye" x="115" y="404"/>
<path d="M133 380h2l4-3v8l-4-3h-2z" fill="#50667c"/>
<use href="#mute" x="130.500" y="388"/><use href="#mute" x="130.500" y="401.500"/>
<use href="#phones" x="145" y="376"/><use href="#phones" x="145" y="390"/><use href="#phones" x="145" y="403"/>
<rect x="159" y="377" width="70" height="6" fill="#0e0f13"/><rect x="159" y="390.500" width="70" height="6" fill="#0e0f13"/><rect x="159" y="404" width="70" height="6" fill="#0e0f13"/><rect x="160" y="417" width="70" height="6" fill="#14151b"/>
<rect x="160" y="378" width="27" height="1" fill="#4a90f5"/><rect x="160" y="380.500" width="20" height="1" fill="#4a90f5"/><rect x="160" y="418" width="32" height="1" fill="#4a90f5"/><rect x="160" y="420.500" width="26" height="1" fill="#4a90f5"/>
<path d="M224.500 377v6M224.500 390.500v6M224.500 404v6" stroke="#2b2c36"/>
<rect x="203.500" y="375" width="2.500" height="10" fill="#e6e6ea"/><rect x="203.500" y="388.500" width="2.500" height="10" fill="#e6e6ea"/><rect x="203.500" y="402" width="2.500" height="10" fill="#e6e6ea"/><rect x="204.500" y="415" width="2.500" height="10" fill="#e6e6ea"/>
<text x="232.500" y="384" style="font-size:9px;font-weight:bold;fill:#444857">A</text><text x="232.500" y="397.500" style="font-size:9px;font-weight:bold;fill:#14151b">A</text><text x="232.500" y="411" style="font-size:9px;font-weight:bold;fill:#14151b">A</text><text x="232.500" y="424" style="font-size:9px;font-weight:bold;fill:#14151b">A</text><text x="263" y="384" style="font-size:9px;font-weight:bold;fill:#444857">A</text><text x="263" y="397.500" style="font-size:9px;font-weight:bold;fill:#14151b">A</text><text x="263" y="411" style="font-size:9px;font-weight:bold;fill:#14151b">A</text><text x="263" y="424" style="font-size:9px;font-weight:bold;fill:#14151b">A</text>
<use href="#knob" x="253.500" y="380"/><use href="#knob" x="253.500" y="393.500"/><use href="#knob" x="253.500" y="407"/><use href="#knob" x="253.500" y="420"/><use href="#knob" x="142.500" y="420"/>
<use href="#mix" x="279" y="376"/><use href="#mix" x="279" y="389.500"/><use href="#mix" x="279" y="403"/>
<text x="301" y="369.500" text-anchor="middle" class="t">1</text><text x="341.700" y="369.500" text-anchor="middle" class="t">4</text><text x="395.300" y="369.500" text-anchor="middle" class="t">8</text><text x="450" y="369.500" text-anchor="middle" class="t">12</text>
<!-- grid -->
<rect x="295" y="373.300" width="175" height="40" fill="#3a3c49"/>
<rect x="295" y="373.300" width="175" height="13" fill="#ee7b7b"/>
<rect x="349" y="386.700" width="108" height="12.800" fill="#ebd27a"/>
<rect x="335.500" y="400.200" width="134.500" height="13" fill="#6ec6e4"/>
<path d="M308.500 373v40.500M322 373v40.500M335.500 373v40.500M349 373v40.500M362.500 373v40.500M376 373v40.500M389.500 373v40.500M403 373v40.500M416.500 373v40.500M430 373v40.500M443.500 373v40.500M457 373v40.500M295 386.500h175M295 400h175" stroke="#2f303a" stroke-width=".7"/>
<rect x="351" y="375" width="9" height="9.500" rx="1" fill="#0c0c10"/>
<path d="M299 415.500h4.500v5l-2.250-1.500-2.250 1.500z" fill="#fff"/>
<text x="309" y="421" style="font-size:6px;fill:#b0b4c0">Intro</text>
<rect x="351.500" y="415" width="7.500" height="7" rx="1" fill="none" stroke="#b0b4c0" stroke-width=".6"/><text x="355.200" y="420.800" text-anchor="middle" style="font-size:5px;fill:#c8ccd6">A</text>
<rect x="405.500" y="415" width="7.500" height="7" rx="1" fill="none" stroke="#b0b4c0" stroke-width=".6"/><text x="409.200" y="420.800" text-anchor="middle" style="font-size:5px;fill:#c8ccd6">B</text>
</svg>
</body></html>
